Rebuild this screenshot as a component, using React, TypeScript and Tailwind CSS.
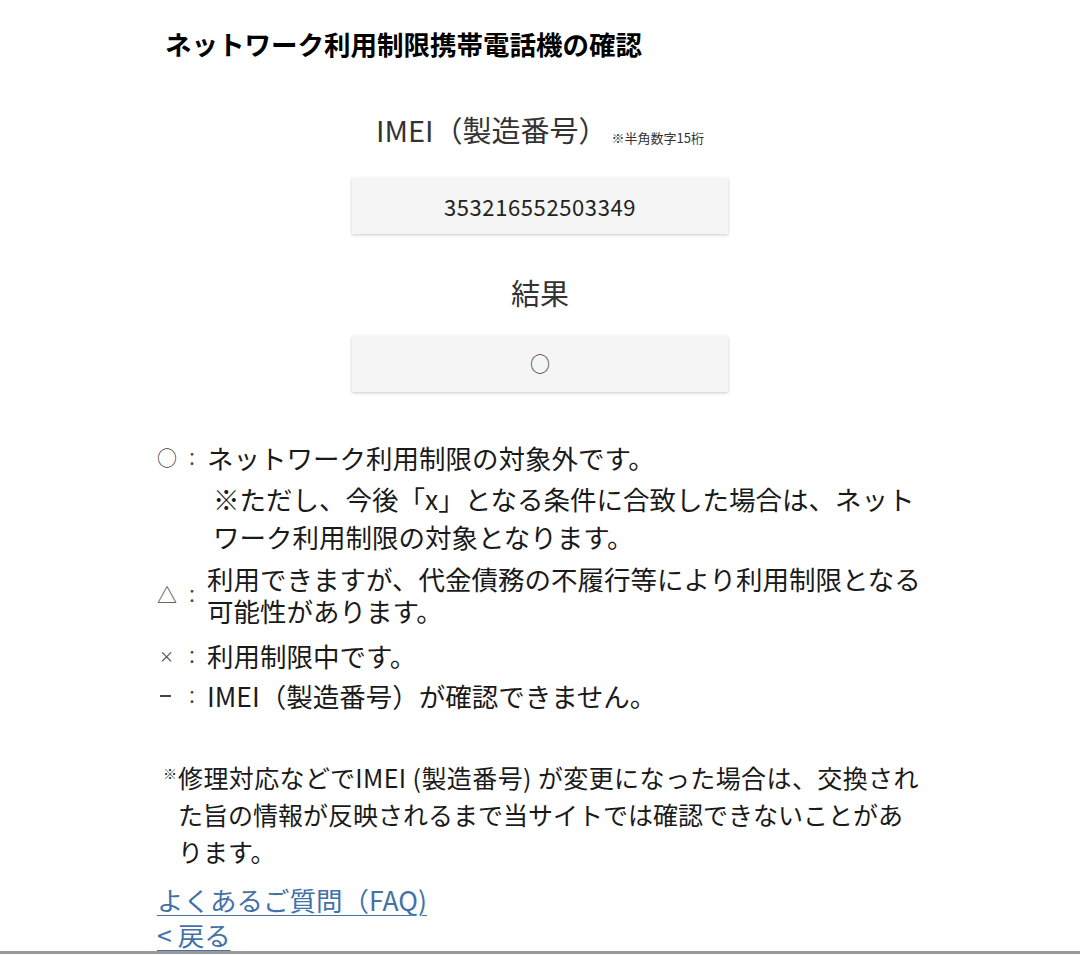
import React from "react";

const font = { fontFamily: '"Noto Sans CJK JP", "Noto Sans", sans-serif' };

const legend = [
  { mark: "○", lines: ["ネットワーク利用制限の対象外です。"] },
  {
    mark: "△",
    lines: ["利用できますが、代金債務の不履行等により利用制限となる", "可能性があります。"],
  },
  { mark: "×", lines: ["利用制限中です。"] },
  { mark: "−", lines: ["IMEI（製造番号）が確認できません。"] },
];

const LegendRow: React.FC<{ mark: string; lines: string[]; className?: string }> = ({ mark, lines, className }) => (
  <div className={`flex items-center ${className ?? ""}`}>
    <div className="flex w-[50px] shrink-0 items-center leading-[32px] text-[#444]">
      {mark === "−" ? (
        <span className="flex w-[26px] items-center pl-[3px]">
          <span className="block h-[1.5px] w-[11px] bg-[#444]" />
        </span>
      ) : (
        <span className={mark === "×" ? "w-[26px] pl-[2px] text-[15px]" : "w-[26px] text-[20px]"}>{mark}</span>
      )}
      <span className="text-[18px]">：</span>
    </div>
    <div className="whitespace-nowrap text-[26.5px] leading-[32px] text-[#1a1a1a]">
      {lines.map((l) => (
        <div key={l}>{l}</div>
      ))}
    </div>
  </div>
);

const App: React.FC = () => {
  return (
    <div className="h-[955px] overflow-hidden bg-white" style={font}>
      <div className="mx-auto w-[766px] pt-[26px]">
        {/* Title */}
        <h1 className="whitespace-nowrap pl-2 text-[26.5px] font-bold leading-[36px] text-black">
          ネットワーク利用制限携帯電話機の確認
        </h1>

        {/* IMEI */}
        <div className="mt-[47px] flex items-end justify-center leading-[40px] text-[#333]">
          <span className="text-[29px]">IMEI（製造番号）</span>
          <span className="ml-[4px] mb-[1px] text-[13px] leading-[20px]">※半角数字15桁</span>
        </div>
        <div className="mx-auto mt-[29px] flex h-[56px] w-[376px] items-center justify-center bg-[#f5f5f5] text-[22px] tracking-[0.6px] text-[#222] shadow-[0_1px_3px_rgba(0,0,0,0.22)]">
          353216552503349
        </div>

        {/* Result */}
        <div className="mt-[38px] text-center text-[29px] leading-[40px] text-[#333]">結果</div>
        <div className="mx-auto mt-[24px] flex h-[56px] w-[376px] items-center justify-center bg-[#f5f5f5] text-[20px] text-[#444] shadow-[0_1px_3px_rgba(0,0,0,0.22)]">
          ○
        </div>

        {/* Legend */}
        <div className="mt-[50px]">
          <LegendRow mark={legend[0].mark} lines={legend[0].lines} />
          <div className="ml-[56px] mt-[6px] whitespace-nowrap text-[26.5px] leading-[38px] text-[#1a1a1a]">
            <div>※ただし、今後「x」となる条件に合致した場合は、ネット</div>
            <div>ワーク利用制限の対象となります。</div>
          </div>
          <LegendRow mark={legend[1].mark} lines={legend[1].lines} className="mt-[7px]" />
          <LegendRow mark={legend[2].mark} lines={legend[2].lines} className="mt-[13px]" />
          <LegendRow mark={legend[3].mark} lines={legend[3].lines} className="mt-[8px]" />
        </div>

        {/* Note */}
        <div className="relative mt-[47px] whitespace-nowrap pl-[21px] text-[25px] leading-[37px] text-[#1a1a1a]">
          <span className="absolute left-[6px] top-[-4px] text-[14px]">※</span>
          <div className="tracking-[0.4px]">修理対応などでIMEI (製造番号) が変更になった場合は、交換され</div>
          <div>た旨の情報が反映されるまで当サイトでは確認できないことがあ</div>
          <div>ります。</div>
        </div>

        {/* Links */}
        <div className="mt-[12px] whitespace-nowrap text-[26.5px] text-[#4272a8]">
          <div className="leading-[36px]">
            <a href="#" className="underline decoration-1 underline-offset-4">よくあるご質問（FAQ)</a>
          </div>
          <div className="leading-[33px]">
            <a href="#" className="underline decoration-1 underline-offset-4">&lt; 戻る</a>
          </div>
        </div>
      </div>
      <div className="h-[3px] w-full bg-[#9a9a9a]" />
    </div>
  );
};

export default App;
